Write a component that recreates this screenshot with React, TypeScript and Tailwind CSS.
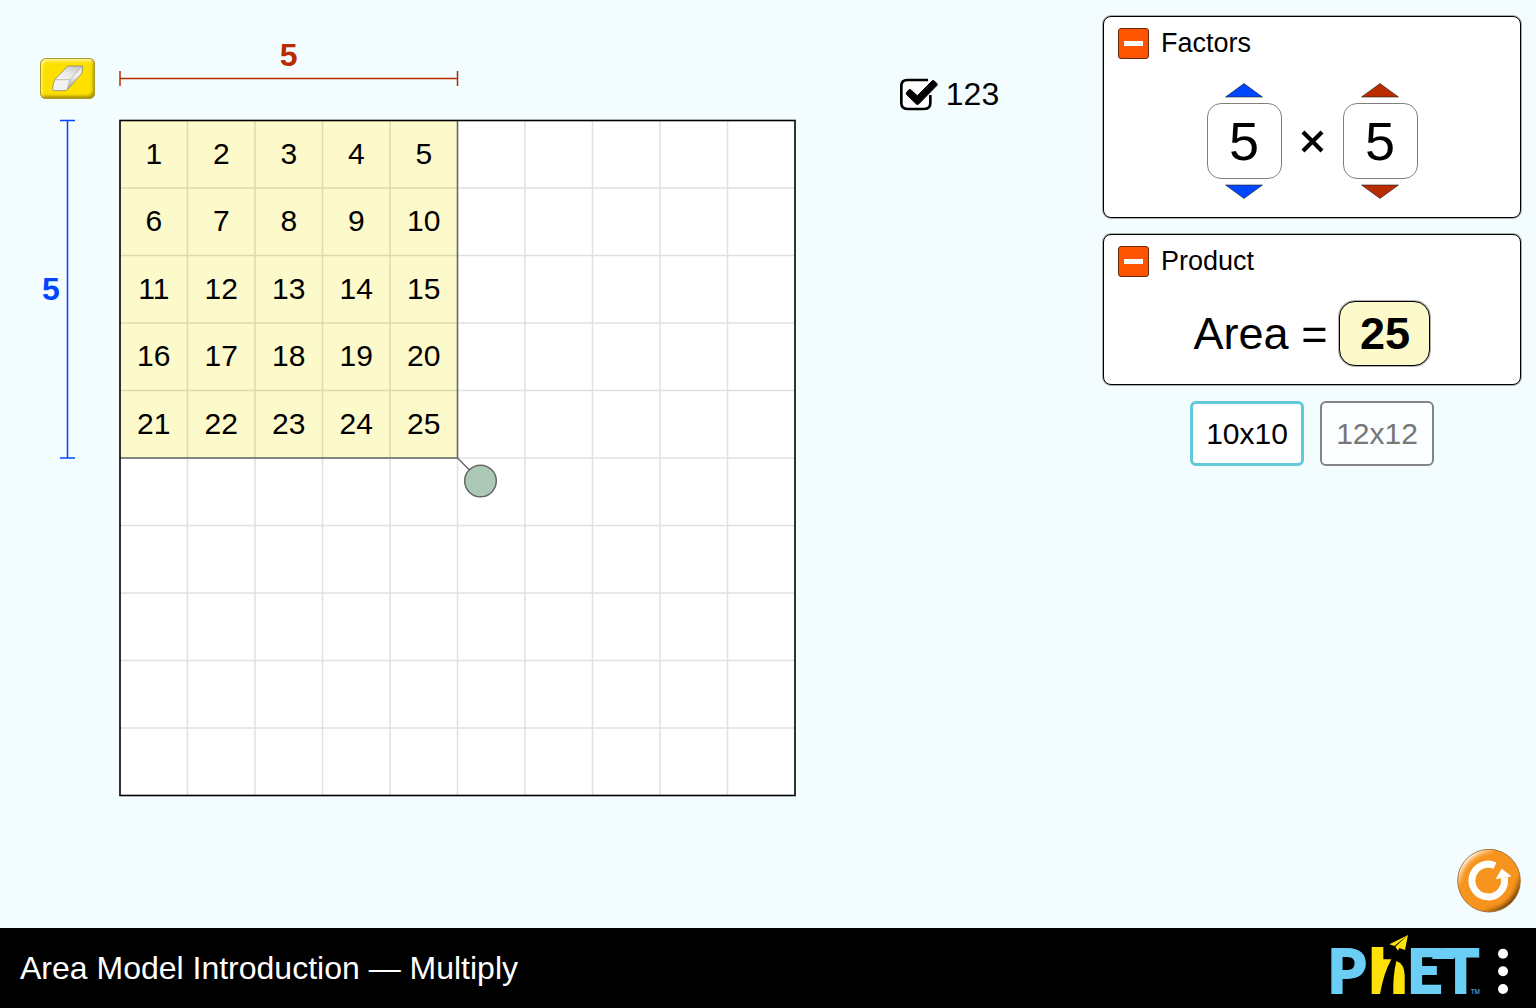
import { useState } from "react";
import type { ReactNode } from "react";

const SIZE = 675;

type Tone = "blue" | "red";

const toneFill: Record<Tone, string> = {
  blue: "fill-[#0046ff]",
  red: "fill-[#b82c00]",
};

function EraserIcon() {
  return (
    <svg viewBox="60 54 165 123" className="h-[41px] w-[55px]" aria-hidden="true">
      <defs>
        <linearGradient id="er-top" x1="0" y1="1" x2="1" y2="0">
          <stop offset="0" stopColor="#f8f8f8" />
          <stop offset="0.5" stopColor="#e6e6e6" />
          <stop offset="1" stopColor="#bdbdbd" />
        </linearGradient>
        <linearGradient id="er-side" x1="0" y1="0" x2="0" y2="1">
          <stop offset="0" stopColor="#e8e8e8" />
          <stop offset="0.4" stopColor="#f2f2f2" />
          <stop offset="1" stopColor="#a0a0a0" />
        </linearGradient>
      </defs>
      <path d="M143 78H188L150 119H104Z" fill="url(#er-top)" />
      <path d="M188 78L186 99L142 150Q145 134 150 119Z" fill="url(#er-side)" />
      <path d="M104 119H150Q145 134 141 150Q137 152 130 152H101Q97 151 98 144Q99 130 104 119Z" fill="#f1f1f1" />
      <path
        d="M143 78H188L186 99L144 147Q140 152 130 152H101Q97 151 98 144Q99 130 104 119Z"
        fill="none"
        stroke="#8f8a6c"
        strokeWidth="2.5"
        strokeLinejoin="round"
      />
      <path d="M104 119H150L188 78M150 119Q144 133 142 150" fill="none" stroke="#a9a9a9" strokeWidth="2" />
    </svg>
  );
}

function Triangle({ tone, down = false }: { tone: Tone; down?: boolean }) {
  return (
    <svg viewBox="0 0 38 15" className={`block h-[15px] w-[38px] ${toneFill[tone]}`} aria-hidden="true">
      <path d={down ? "M0.5 1H37.5L19 14.5Z" : "M0.5 14H37.5L19 0.5Z"} stroke="#222" strokeWidth="0.6" />
    </svg>
  );
}

function FactorPicker({
  tone,
  label,
  value,
  onChange,
}: {
  tone: Tone;
  label: string;
  value: number;
  onChange: (n: number) => void;
}) {
  return (
    <div className="flex flex-col items-center gap-[5px]">
      <button type="button" aria-label={`Increase ${label}`} onClick={() => onChange(Math.min(10, value + 1))}>
        <Triangle tone={tone} />
      </button>
      <output
        aria-label={label}
        className="flex h-[76px] w-[75px] items-center justify-center rounded-[14px] border border-[#808080] bg-white text-[54px] leading-none"
      >
        {value}
      </output>
      <button type="button" aria-label={`Decrease ${label}`} onClick={() => onChange(Math.max(1, value - 1))}>
        <Triangle tone={tone} down />
      </button>
    </div>
  );
}

function Panel({ title, children }: { title: string; children: ReactNode }) {
  const [open, setOpen] = useState(true);
  return (
    <section className="rounded-lg border border-black bg-white px-[14px] pt-[11px] pb-[18px] shadow-[0_0_0_1px_rgba(0,0,0,0.3)]">
      <div className="flex items-center gap-3">
        <button
          type="button"
          aria-label={title}
          aria-expanded={open}
          onClick={() => setOpen(!open)}
          className="flex size-[31px] items-center justify-center rounded-[3px] border border-[#6b2a0c] bg-[#ff5500]"
        >
          <span className="h-[5px] w-[19px] bg-[#fafafa]" />
        </button>
        <h2 className="text-[27px] leading-[31px]">{title}</h2>
      </div>
      {open && <div className="mt-6">{children}</div>}
    </section>
  );
}

function Board({
  rows,
  cols,
  max,
  numbered,
}: {
  rows: number;
  cols: number;
  max: number;
  numbered: boolean;
}) {
  const unit = SIZE / max;
  const w = cols * unit;
  const h = rows * unit;
  const inner = Array.from({ length: max - 1 }, (_, i) => (i + 1) * unit);
  const lines = inner.map((p) => `M${p} 0V675M0 ${p}H675`).join("");
  return (
    <div className="relative size-[675px]">
      <svg viewBox="0 -0.5 675 675" className="absolute inset-0 size-full overflow-visible" aria-hidden="true">
        <rect width="675" height="675" fill="#fff" />
        <rect width={w} height={h} fill="#fcf9cb" />
        <path d={lines} stroke="#000" strokeOpacity="0.12" strokeWidth="1.5" />
        <path d={`M${w} 0V${h}H0`} fill="none" stroke="#666" strokeWidth="1.5" />
        <rect width="675" height="675" fill="none" stroke="#000" strokeWidth="1.6" />
        <path d={`M${w} ${h}l16 16`} stroke="#666" strokeWidth="1.5" />
        <circle cx={w + 23} cy={h + 23} r="15.8" fill="#acc9b8" stroke="#666" strokeWidth="1.5" />
      </svg>
      <table className="relative table-fixed border-collapse text-[30px] leading-none" style={{ width: w, height: h }}>
        <tbody>
          {Array.from({ length: rows }, (_, r) => (
            <tr key={r}>
              {Array.from({ length: cols }, (_, c) => (
                <td key={c} className="p-0 text-center align-middle">
                  {numbered ? r * cols + c + 1 : ""}
                </td>
              ))}
            </tr>
          ))}
        </tbody>
      </table>
    </div>
  );
}

function ResetIcon() {
  return (
    <svg viewBox="53 27 192 192" className="size-16" aria-hidden="true">
      <defs>
        <linearGradient id="rs-edge" x1="0.15" y1="0.15" x2="0.85" y2="0.85">
          <stop offset="0" stopColor="#fff0dc" />
          <stop offset="0.25" stopColor="#f7941d" />
          <stop offset="0.75" stopColor="#f7941d" />
          <stop offset="1" stopColor="#7a4608" />
        </linearGradient>
        <radialGradient id="rs-core">
          <stop offset="0.8" stopColor="#f7941d" />
          <stop offset="1" stopColor="#f7941d" stopOpacity="0" />
        </radialGradient>
      </defs>
      <circle cx="149" cy="122" r="94" fill="url(#rs-edge)" stroke="#9a6324" strokeWidth="2.5" />
      <circle cx="149" cy="122" r="90" fill="url(#rs-core)" />
      <path d="M167 77A49 49 0 1 0 195 113" fill="none" stroke="#fff" strokeWidth="21" />
      <path d="M187 86L169 118L217 109Z" fill="#fff" />
    </svg>
  );
}

function PhetLogo() {
  return (
    <svg viewBox="30 12 456 204" className="h-[68px] w-[152px] overflow-visible" role="img" aria-label="PhET">
      <g fill="#6acef5" fontFamily="Lato" fontWeight="900" fontSize="183" stroke="#6acef5" strokeWidth="6">
        <text x="23" y="189">P</text>
        <text x="262" y="189">ET</text>
        <rect x="340" y="58" width="60" height="26" />
      </g>
      <g fill="#fee108">
        <path d="M155 51H190V88H214Q191 130 180 192H155Z" />
        <path d="M229 93Q253 100 254 136V192H220Q218 140 229 93Z" />
        <path d="M264 15L208 43L223 48ZM264 15L226 50L234 62L238 54L255 60Z" />
      </g>
      <text x="452" y="192" fill="#6acef5" fontFamily="Liberation Sans" fontSize="19">
        TM
      </text>
    </svg>
  );
}

export default function App() {
  const [rows, setRows] = useState(5);
  const [cols, setCols] = useState(5);
  const [numbered, setNumbered] = useState(true);
  const [max, setMax] = useState(10);
  const spanW = (cols * SIZE) / max;
  const spanH = (rows * SIZE) / max;

  return (
    <div className="flex min-h-screen flex-col bg-[#f3fcff] font-['Liberation_Sans',Arial,sans-serif] text-black">
      <main className="flex flex-1">
        <section aria-label="Area model" className="mt-10 ml-10 grid grid-cols-[80px_675px] grid-rows-[80px_auto] self-start">
          <div className="pt-[18px]">
            <button
              type="button"
              aria-label="Erase"
              onClick={() => {
                setRows(1);
                setCols(1);
              }}
              className="block h-[41px] w-[55px] rounded-md bg-[#fde000] shadow-[inset_0_0_0_1px_#a89a2a,inset_2px_3px_3px_#fff59a,inset_-2px_-3px_3px_#a89400]"
            >
              <EraserIcon />
            </button>
          </div>
          <div className="flex flex-col items-center text-[#b82c00]" style={{ width: spanW }}>
            <span className="text-[32px] leading-[31px] font-bold">{cols}</span>
            <svg
              width={spanW}
              height="15"
              className="shrink-0 overflow-visible"
              stroke="currentColor"
              strokeWidth="1.5"
              aria-hidden="true"
            >
              <path d={`M0 0V15M0 7.5H${spanW}M${spanW} 0V15`} />
            </svg>
          </div>
          <div className="flex items-center pl-[2px] text-[#0046ff]" style={{ height: spanH }}>
            <span className="w-[18px] text-[32px] leading-none font-bold">{rows}</span>
            <svg
              width="15"
              height={spanH}
              viewBox={`0 -0.5 15 ${spanH}`}
              className="shrink-0 overflow-visible"
              stroke="currentColor"
              strokeWidth="1.5"
              aria-hidden="true"
            >
              <path d={`M0 0H15M7.5 0V${spanH}M0 ${spanH}H15`} />
            </svg>
          </div>
          <Board rows={rows} cols={cols} max={max} numbered={numbered} />
        </section>

        <div className="mt-[77px] flex flex-1 items-start justify-center">
          <label className="flex cursor-pointer items-center gap-2">
            <input
              type="checkbox"
              checked={numbered}
              onChange={(e) => setNumbered(e.target.checked)}
              className="sr-only"
            />
            <svg viewBox="57 53 117 99" className="h-[33px] w-[39px]" aria-hidden="true">
              <path
                d="M144 59H82Q64 59 64 77V128Q64 146 82 146H133Q151 146 151 128V104"
                fill="#fff"
                stroke="#000"
                strokeWidth="8"
              />
              {numbered && (
                <path
                  d="M79 97L87 88L92 88L112 106L157 61L162 61L171 70L171 75L115 132L110 132L79 102Z"
                  stroke="#000"
                  strokeWidth="3"
                  strokeLinejoin="round"
                />
              )}
            </svg>
            <span className="text-[32px] leading-[34px]">123</span>
          </label>
        </div>

        <aside className="mr-[15px] flex w-[418px] flex-col gap-4 pt-4 pb-[15px]">
          <Panel title="Factors">
            <div className="flex items-center justify-center">
              <FactorPicker tone="blue" label="vertical factor" value={rows} onChange={setRows} />
              <svg viewBox="0 0 23 23" className="mx-[19px] size-[23px]" role="img" aria-label="times">
                <path d="M2 2L21 21M21 2L2 21" stroke="#000" strokeWidth="4.2" />
              </svg>
              <FactorPicker tone="red" label="horizontal factor" value={cols} onChange={setCols} />
            </div>
          </Panel>
          <Panel title="Product">
            <div className="flex items-center justify-center gap-3 text-[45px] leading-none">
              <span>Area =</span>
              <output className="flex h-[65px] w-[91px] items-center justify-center rounded-2xl border border-black bg-[#fcf9cb] font-bold shadow-[0_0_0_1px_rgba(0,0,0,0.3)]">
                {rows * cols}
              </output>
            </div>
          </Panel>
          <div className="flex justify-center gap-4 text-[30px] leading-none">
            {[10, 12].map((n) => (
              <button
                key={n}
                type="button"
                aria-pressed={max === n}
                onClick={() => setMax(n)}
                className={
                  max === n
                    ? "h-[65px] w-[114px] rounded-md border-[3px] border-[#61c9d9] bg-white text-black"
                    : "h-[65px] w-[114px] rounded-md border-2 border-[#828485] bg-[#fafeff] text-[#777]"
                }
              >
                {n}x{n}
              </button>
            ))}
          </div>
          <button type="button" aria-label="Reset all" className="mt-auto self-end rounded-full">
            <ResetIcon />
          </button>
        </aside>
      </main>

      <footer className="flex h-20 items-center bg-black pr-7 pl-5 text-white">
        <h1 className="mr-auto text-[32px] leading-none">Area Model Introduction — Multiply</h1>
        <a href="#phet">
          <PhetLogo />
        </a>
        <button type="button" aria-label="Menu" className="ml-4">
          <svg viewBox="533 12 30 204" className="h-[68px] w-[10px]" fill="#fff" aria-hidden="true">
            <circle cx="548" cy="71" r="15" />
            <circle cx="548" cy="124" r="15" />
            <circle cx="548" cy="177" r="15" />
          </svg>
        </button>
      </footer>
    </div>
  );
}
